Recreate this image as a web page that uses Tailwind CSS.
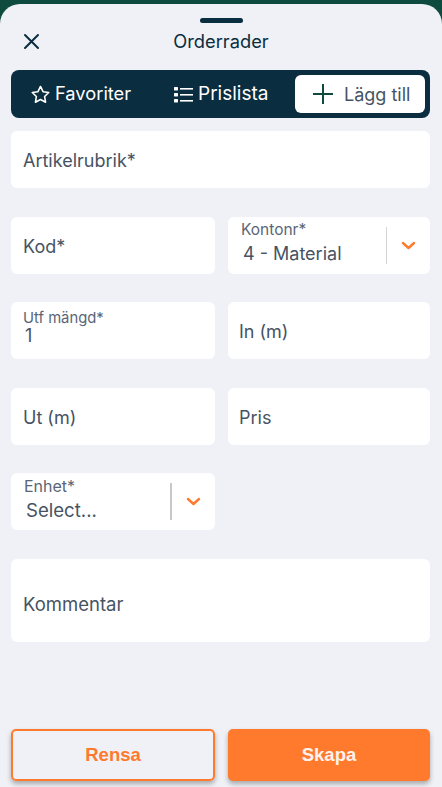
<!DOCTYPE html>
<html lang="en">
<head>
    <meta charset="UTF-8">
    <meta name="viewport" content="width=device-width, initial-scale=1.0">
    <script src="https://cdn.jsdelivr.net/npm/@tailwindcss/browser@4"></script>
    <title>Orderrader</title>
</head>
<body class="bg-[#0f4a3f] font-['Inter',sans-serif]">
    <div class="h-[787px] w-[442px] overflow-hidden pt-[4px]">
      <div class="flex h-[783px] flex-col rounded-t-[20px] bg-[#eff1f6] px-[11px] pt-[14px] text-[#465363]">
        <div class="mx-auto h-[5px] w-[43px] rounded-full bg-[#0a2d40]"></div>

        <!-- header -->
        <div class="relative flex h-[37px] items-center justify-center">
          <svg class="absolute left-[12px] top-[10px] h-[17px] w-[17px]" viewBox="0 0 17 17" fill="none" stroke="#0a2d40" stroke-width="2" stroke-linecap="round"><path d="M2 2l13 13M15 2L2 15"/></svg>
          <span class="text-[18.300px] font-normal text-[#0a2d40]">Orderrader</span>
        </div>

        <!-- tabs -->
        <div class="mt-[10px] flex h-[48px] w-[419px] items-center rounded-[8px] bg-[#0a2d40] pr-[5px] text-[18px] text-white">
          <div class="flex w-[143px] items-center pl-[19px]">
            <svg class="mr-[4px] h-[21px] w-[21px]" viewBox="0 0 24 24" fill="none" stroke="white" stroke-width="1.800" stroke-linejoin="round"><path d="M12 2.800l2.900 6 6.500.9-4.700 4.600 1.100 6.500-5.800-3.100-5.800 3.100 1.100-6.500-4.700-4.600 6.500-.9z"/></svg>
            <span class="text-[18.300px]">Favoriter</span>
          </div>
          <div class="flex w-[141px] items-center pl-[20px]">
            <svg class="mr-[5px] h-[19px] w-[19px]" viewBox="0 0 19 19" fill="white"><rect x="0" y="2" width="4" height="3.400" rx="0.600"/><rect x="0" y="8" width="4" height="3.400" rx="0.600"/><rect x="0" y="14" width="4" height="3.400" rx="0.600"/><rect x="6" y="3" width="13" height="1.600"/><rect x="6" y="9" width="13" height="1.600"/><rect x="6" y="15" width="13" height="1.600"/></svg>
            <span class="text-[19px]">Prislista</span>
          </div>
          <div class="flex h-[38px] w-[130px] items-center rounded-[6px] bg-white pl-[18px] text-[#465363]">
            <svg class="mr-[11px] h-[20px] w-[20px]" viewBox="0 0 20 20" fill="none" stroke="#0f4a3f" stroke-width="2"><path d="M10 0v20M0 10h20"/></svg>
            Lägg till
          </div>
        </div>

        <!-- form -->
        <div class="mt-[13px] grid w-[419px] grid-cols-[204px_202px] gap-x-[13px] gap-y-[28.600px] text-[18px]">
          <div class="col-span-2 flex h-[57px] items-center rounded-[6px] bg-white pl-[12px] pt-[2px]">Artikelrubrik*</div>

          <div class="flex h-[57px] items-center rounded-[6px] bg-white pl-[12px] pt-[2px]">Kod*</div>
          <div class="flex h-[57px] items-center rounded-[6px] bg-white">
            <div class="flex-1 pb-[3px] pl-[13px]">
              <div class="text-[15.500px] leading-[16px] text-[#5a6675]">Kontonr*</div>
              <div class="mt-[4px] pl-[2px] leading-[24px]">4 - Material</div>
            </div>
            <div class="h-[37px] w-[1px] bg-[#d4d4d4]"></div>
            <svg class="mx-[14px] h-[9px] w-[15px]" viewBox="0 0 15 9" fill="none" stroke="#ff7a2d" stroke-width="2.400" stroke-linecap="round" stroke-linejoin="round"><path d="M2 2l5.500 5L13 2"/></svg>
          </div>

          <div class="h-[57px] rounded-[6px] bg-white pl-[12px] pt-[8px]">
            <div class="text-[14.800px] leading-[16px] text-[#5a6675]">Utf mängd*</div>
            <div class="pl-[2px] leading-[20px]">1</div>
          </div>
          <div class="flex h-[57px] items-center rounded-[6px] bg-white pl-[11px] pt-[2px]">In (m)</div>

          <div class="flex h-[57px] items-center rounded-[6px] bg-white pl-[12px] pt-[2px]">Ut (m)</div>
          <div class="flex h-[57px] items-center rounded-[6px] bg-white pl-[11px] pt-[2px]">Pris</div>

          <div class="flex h-[57px] items-center rounded-[6px] bg-white">
            <div class="flex-1 pb-[3px] pl-[13px]">
              <div class="text-[16px] leading-[16px] text-[#5a6675]">Enhet*</div>
              <div class="mt-[4px] pl-[2px] text-[18.600px] leading-[24px]">Select...</div>
            </div>
            <div class="h-[37px] w-[2px] bg-[#c8c8c8]"></div>
            <svg class="mx-[14px] h-[9px] w-[15px]" viewBox="0 0 15 9" fill="none" stroke="#ff7a2d" stroke-width="2.400" stroke-linecap="round" stroke-linejoin="round"><path d="M2 2l5.500 5L13 2"/></svg>
          </div>
          <div></div>

          <div class="col-span-2 flex h-[83px] items-center rounded-[6px] bg-white pl-[12px] pt-[8px] text-[18.500px]">Kommentar</div>
        </div>

        <!-- actions -->
        <div class="mt-[87px] grid w-[419px] grid-cols-[204px_202px] gap-x-[13px] font-['Liberation_Sans',sans-serif] text-[18.500px] font-bold">
          <button class="h-[52px] rounded-[5px] border-2 border-[#ff7a2d] text-[#ff7a2d] shadow-[0_3px_5px_rgba(0,0,0,0.3)]">Rensa</button>
          <button class="h-[52px] rounded-[5px] bg-[#ff7a2d] text-[#fdf3ec] shadow-[0_3px_5px_rgba(0,0,0,0.3)]">Skapa</button>
        </div>
      </div>
    </div>
</body>
</html>
